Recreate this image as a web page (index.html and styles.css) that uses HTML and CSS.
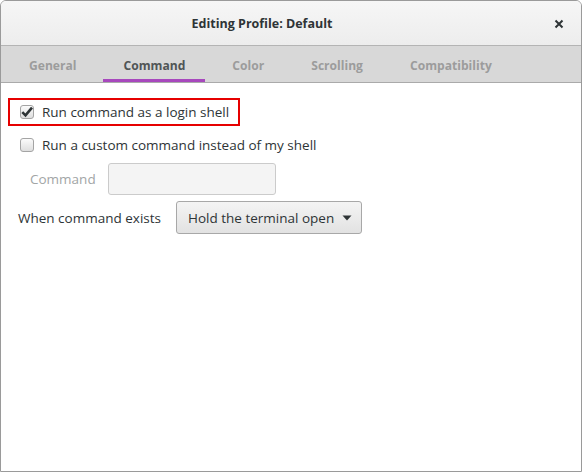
FILE: index.html
```html
<!DOCTYPE html>
<html>
<head>
<meta charset="utf-8">
<link rel="stylesheet" href="styles.css">
</head>
<body>
<div class="window">
  <div class="header">
    <div class="title">Editing Profile: Default</div>
    <div class="close">
      <svg width="10" height="10" viewBox="0 0 10 10"><path d="M1.5 1.5 L8.5 8.5 M8.5 1.5 L1.5 8.5" stroke="#2e3436" stroke-width="2" fill="none"/></svg>
    </div>
  </div>
  <div class="tabs">
    <div class="tab">General</div>
    <div class="tab active">Command</div>
    <div class="tab">Color</div>
    <div class="tab">Scrolling</div>
    <div class="tab">Compatibility</div>
  </div>
  <div class="content">
    <div class="login-box">
      <span class="check checked">
        <svg width="12" height="12" viewBox="0 0 12 12"><path d="M1.3 6.2 L4.5 9.4 L11 1.6" stroke="#2e3436" stroke-width="2.6" fill="none"/></svg>
      </span>
      <span class="label">Run command as a login shell</span>
    </div>
    <div class="row2">
      <span class="check"></span>
      <span class="label">Run a custom command instead of my shell</span>
    </div>
    <div class="cmd-row">
      <span class="dim">Command</span>
      <span class="entry"></span>
    </div>
    <div class="exit-row">
      <span class="label">When command exists</span>
      <span class="combo">Hold the terminal open
        <svg class="arrow" width="10" height="6" viewBox="0 0 10 6"><path d="M0.5 0.5 L9.5 0.5 L5 5.5 Z" fill="#2e3436"/></svg>
      </span>
    </div>
  </div>
</div>
</body>
</html>
```
FILE: styles.css
```css
html, body {
  margin: 0;
  padding: 0;
  background: #ffffff;
}
body {
  font-family: "Open Sans", "Noto Sans", sans-serif;
  font-size: 13.5px;
  color: #2e3436;
}
.window {
  width: 582px;
  height: 472px;
  box-sizing: border-box;
  border: 1px solid #9a9a9a;
  border-radius: 6px 6px 0 0;
  overflow: hidden;
  background: #ffffff;
  display: flex;
  flex-direction: column;
}
.header {
  height: 44px;
  flex-shrink: 0;
  border-bottom: 1px solid #b4b4b4;
  background: linear-gradient(#f6f6f6, #ededed);
  display: flex;
  align-items: center;
  justify-content: center;
  position: relative;
}
.title {
  font-weight: bold;
  font-size: 12.5px;
  color: #2e3436;
  margin-left: -58px;
  margin-top: 1px;
}
.close {
  position: absolute;
  right: 17px;
  top: 18px;
  width: 10px;
  height: 10px;
  display: flex;
}
.tabs {
  height: 37px;
  flex-shrink: 0;
  box-sizing: border-box;
  background: #d8d8d8;
  border-bottom: 1px solid #aaaaaa;
  display: flex;
  padding-left: 8px;
  gap: 7px;
}
.tab {
  padding: 6px 20px 0 20px;
  display: flex;
  align-items: center;
  font-weight: bold;
  font-size: 12.1px;
  color: #9c9c9c;
  border-bottom: 3px solid transparent;
}
.tab.active {
  color: #505556;
  border-bottom-color: #a748bd;
}
.content {
  padding: 15px 0 0 7px;
  display: flex;
  flex-direction: column;
  align-items: flex-start;
}
.login-box {
  width: 232px;
  height: 28px;
  box-sizing: border-box;
  border: 2px solid #e60000;
  display: flex;
  align-items: center;
  padding-left: 10px;
}
.check {
  width: 14px;
  height: 14px;
  box-sizing: border-box;
  border: 1px solid #a4a4a4;
  border-radius: 3px;
  background: linear-gradient(#fbfbfb, #dedede);
  display: flex;
  align-items: center;
  justify-content: center;
  flex-shrink: 0;
}
.check svg {
  margin-top: -1px;
}
.label {
  margin-left: 8px;
  white-space: nowrap;
}
.row2 {
  margin-top: 5px;
  height: 28px;
  display: flex;
  align-items: center;
  padding-left: 12px;
}
.cmd-row {
  margin-top: 4px;
  height: 32px;
  display: flex;
  align-items: center;
  padding-left: 22px;
}
.dim {
  color: #a2a5a6;
}
.entry {
  margin-left: 12px;
  width: 168px;
  height: 32px;
  box-sizing: border-box;
  border: 1px solid #cbcbcb;
  border-radius: 3px;
  background: #f4f4f4;
}
.exit-row {
  margin-top: 6px;
  height: 33px;
  display: flex;
  align-items: center;
  padding-left: 10px;
}
.exit-row .label {
  margin-left: 0;
}
.combo {
  margin-left: 15px;
  width: 186px;
  height: 33px;
  box-sizing: border-box;
  border: 1px solid #a8a8a8;
  border-radius: 3px;
  background: linear-gradient(#f4f4f4, #e2e2e2);
  display: flex;
  align-items: center;
  padding-left: 11px;
  white-space: nowrap;
}
.arrow {
  margin-left: 8px;
}
```
